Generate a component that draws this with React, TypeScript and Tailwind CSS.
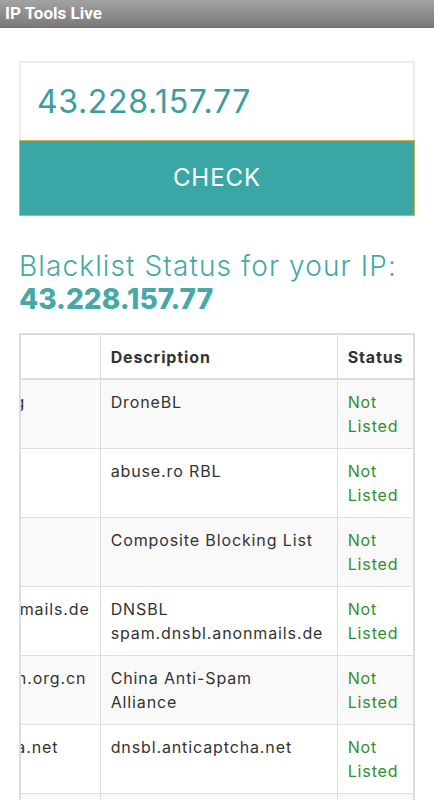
import { useEffect, useRef } from "react";

const rows = [
  { host: "dnsbl.dronebl.org", desc: ["DroneBL"] },
  { host: "rbl.abuse.ro", desc: ["abuse.ro RBL"] },
  { host: "cbl.abuseat.org", desc: ["Composite Blocking List"] },
  { host: "spam.dnsbl.anonmails.de", desc: ["DNSBL spam.dnsbl.anonmails.de"] },
  { host: "cblplus.anti-spam.org.cn", desc: ["China Anti-Spam", "Alliance"] },
  { host: "dnsbl.anticaptcha.net", desc: ["dnsbl.anticaptcha.net"] },
  { host: "bl.spamcop.net", desc: ["SpamCop Blocking List"] },
];

const font = { fontFamily: "Inter, 'DejaVu Sans', sans-serif" };

export default function App() {
  const scroller = useRef<HTMLDivElement>(null);
  const firstCol = useRef<HTMLTableCellElement>(null);

  useEffect(() => {
    // the table is scrolled sideways so only the tail of the host column shows
    if (scroller.current && firstCol.current) {
      scroller.current.scrollLeft = firstCol.current.offsetWidth - 78;
    }
  }, []);

  return (
    <div className="min-h-screen bg-white" style={font}>
      <div className="h-[28px] bg-gradient-to-b from-[#a2a2a2] to-[#7a7a7a] border-b border-[#6f6f6f] flex items-center px-[5px]">
        <span className="text-white font-bold text-[17px]" style={{ fontFamily: "Roboto, sans-serif" }}>
          IP Tools Live
        </span>
      </div>

      <div className="px-[19px] pt-[33px]">
        <div className="h-[79px] border-2 border-b-0 border-[#ececec] flex items-center pl-[16px]">
          <span className="text-[32px] text-[#3a9d9e] tracking-[0.02em]">43.228.157.77</span>
        </div>
        <button className="w-full h-[76px] bg-[#3aa6a6] border border-[#d2b048] text-white text-[24px] tracking-[0.04em] flex items-center justify-center">
          CHECK
        </button>

        <h2 className="mt-[34px] text-[28px] leading-[33px] text-[#45a9a7]">
          <span className="font-light tracking-[0.04em]">Blacklist Status for your IP:</span>
          <br />
          <span className="font-extrabold">43.228.157.77</span>
        </h2>

        <div
          ref={scroller}
          className="mt-[17px] overflow-x-hidden border-2 border-[#dddddd] border-b-0"
        >
          <table className="border-collapse text-[16px] leading-[24px] tracking-[0.055em] text-[#333333]">
            <thead>
              <tr className="border-b-2 border-[#dddddd]">
                <th ref={firstCol} className="px-[10px] h-[44px] border-r border-[#dddddd] text-left whitespace-nowrap font-bold">
                  Host
                </th>
                <th className="px-[10px] w-[237px] min-w-[237px] border-r border-[#dddddd] text-left font-bold">Description</th>
                <th className="px-[10px] w-[76px] min-w-[76px] text-left font-bold">Status</th>
              </tr>
            </thead>
            <tbody>
              {rows.map((r, i) => (
                <tr key={r.host} className={`border-b border-[#dddddd] ${i % 2 === 0 ? "bg-[#f9f9f9]" : "bg-white"}`}>
                  <td className="px-[10px] py-[10px] align-top whitespace-nowrap border-r border-[#dddddd]">{r.host}</td>
                  <td className="px-[10px] py-[10px] align-top border-r border-[#dddddd]">
                    {r.desc.map((line) => (
                      <div key={line}>{line}</div>
                    ))}
                  </td>
                  <td className="px-[10px] py-[10px] align-top text-[#2f8f2f]">
                    Not
                    <br />
                    Listed
                  </td>
                </tr>
              ))}
            </tbody>
          </table>
        </div>
      </div>
    </div>
  );
}
